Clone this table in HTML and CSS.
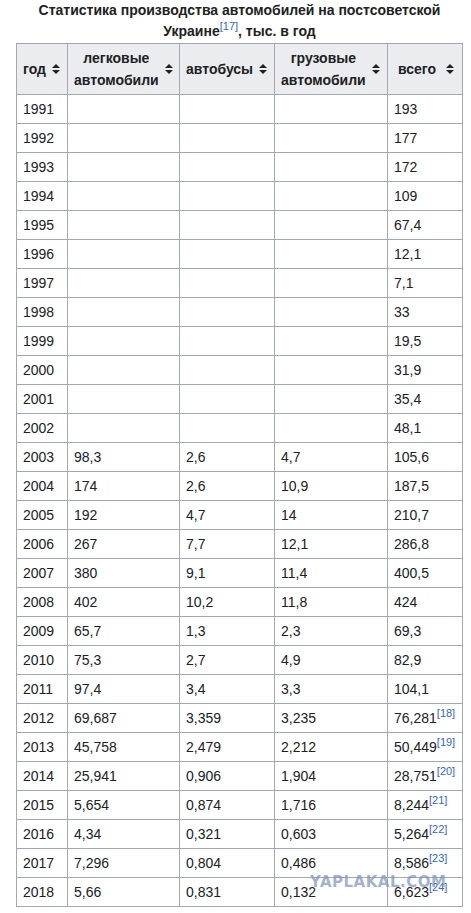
FILE: index.html
```html
<!DOCTYPE html>
<html lang="ru">
<head>
<meta charset="UTF-8">
<link rel="stylesheet" href="styles.css">
</head>
<body>
<div class="page">
  <table class="wikitable">
    <caption>Статистика производства автомобилей на постсоветской Украине<sup class="ref">[17]</sup>, тыс. в год</caption>
    <colgroup>
      <col class="c-year"><col class="c-cars"><col class="c-bus"><col class="c-truck"><col class="c-total">
    </colgroup>
    <thead>
      <tr>
        <th><div class="th-in"><span class="lbl">год</span><svg class="sort" viewBox="0 0 8 10"><path d="M4 0 L8 4 H0 Z M4 10 L8 6 H0 Z"/></svg></div></th>
        <th><div class="th-in"><span class="lbl">легковые автомобили</span><svg class="sort" viewBox="0 0 8 10"><path d="M4 0 L8 4 H0 Z M4 10 L8 6 H0 Z"/></svg></div></th>
        <th><div class="th-in"><span class="lbl">автобусы</span><svg class="sort" viewBox="0 0 8 10"><path d="M4 0 L8 4 H0 Z M4 10 L8 6 H0 Z"/></svg></div></th>
        <th><div class="th-in"><span class="lbl">грузовые автомобили</span><svg class="sort" viewBox="0 0 8 10"><path d="M4 0 L8 4 H0 Z M4 10 L8 6 H0 Z"/></svg></div></th>
        <th><div class="th-in"><span class="lbl">всего</span><svg class="sort" viewBox="0 0 8 10"><path d="M4 0 L8 4 H0 Z M4 10 L8 6 H0 Z"/></svg></div></th>
      </tr>
    </thead>
    <tbody>
      <tr><td>1991</td><td></td><td></td><td></td><td>193</td></tr>
      <tr><td>1992</td><td></td><td></td><td></td><td>177</td></tr>
      <tr><td>1993</td><td></td><td></td><td></td><td>172</td></tr>
      <tr><td>1994</td><td></td><td></td><td></td><td>109</td></tr>
      <tr><td>1995</td><td></td><td></td><td></td><td>67,4</td></tr>
      <tr><td>1996</td><td></td><td></td><td></td><td>12,1</td></tr>
      <tr><td>1997</td><td></td><td></td><td></td><td>7,1</td></tr>
      <tr><td>1998</td><td></td><td></td><td></td><td>33</td></tr>
      <tr><td>1999</td><td></td><td></td><td></td><td>19,5</td></tr>
      <tr><td>2000</td><td></td><td></td><td></td><td>31,9</td></tr>
      <tr><td>2001</td><td></td><td></td><td></td><td>35,4</td></tr>
      <tr><td>2002</td><td></td><td></td><td></td><td>48,1</td></tr>
      <tr><td>2003</td><td>98,3</td><td>2,6</td><td>4,7</td><td>105,6</td></tr>
      <tr><td>2004</td><td>174</td><td>2,6</td><td>10,9</td><td>187,5</td></tr>
      <tr><td>2005</td><td>192</td><td>4,7</td><td>14</td><td>210,7</td></tr>
      <tr><td>2006</td><td>267</td><td>7,7</td><td>12,1</td><td>286,8</td></tr>
      <tr><td>2007</td><td>380</td><td>9,1</td><td>11,4</td><td>400,5</td></tr>
      <tr><td>2008</td><td>402</td><td>10,2</td><td>11,8</td><td>424</td></tr>
      <tr><td>2009</td><td>65,7</td><td>1,3</td><td>2,3</td><td>69,3</td></tr>
      <tr><td>2010</td><td>75,3</td><td>2,7</td><td>4,9</td><td>82,9</td></tr>
      <tr><td>2011</td><td>97,4</td><td>3,4</td><td>3,3</td><td>104,1</td></tr>
      <tr><td>2012</td><td>69,687</td><td>3,359</td><td>3,235</td><td>76,281<sup class="ref">[18]</sup></td></tr>
      <tr><td>2013</td><td>45,758</td><td>2,479</td><td>2,212</td><td>50,449<sup class="ref">[19]</sup></td></tr>
      <tr><td>2014</td><td>25,941</td><td>0,906</td><td>1,904</td><td>28,751<sup class="ref">[20]</sup></td></tr>
      <tr><td>2015</td><td>5,654</td><td>0,874</td><td>1,716</td><td>8,244<sup class="ref">[21]</sup></td></tr>
      <tr><td>2016</td><td>4,34</td><td>0,321</td><td>0,603</td><td>5,264<sup class="ref">[22]</sup></td></tr>
      <tr><td>2017</td><td>7,296</td><td>0,804</td><td>0,486</td><td>8,586<sup class="ref">[23]</sup></td></tr>
      <tr><td>2018</td><td>5,66</td><td>0,831</td><td>0,132</td><td>6,623<sup class="ref">[24]</sup></td></tr>
    </tbody>
  </table>
  <div class="watermark">YAPLAKAL.COM</div>
</div>
</body>
</html>
```

FILE: styles.css
```css
body {
  margin: 0;
  background: #fff;
  font-family: "Liberation Sans", Arial, sans-serif;
  font-size: 14px;
  color: #202122;
}

.page {
  position: relative;
  padding-left: 16px;
}

.wikitable {
  border-collapse: collapse;
  table-layout: fixed;
  width: 447px;
  border: 1px solid #a2a9b1;
  background: #fff;
}

.wikitable caption {
  font-weight: bold;
  line-height: 21px;
  padding-bottom: 1px;
  text-align: center;
}

.c-year { width: 51px; }
.c-cars { width: 112px; }
.c-bus { width: 95px; }
.c-truck { width: 113px; }
.c-total { width: 75px; }

.wikitable th,
.wikitable td {
  border: 1px solid #a2a9b1;
  padding: 3px 6px;
  line-height: 22px;
  vertical-align: middle;
}

.wikitable th {
  background: #eaecf0;
  font-weight: bold;
  padding: 3px 8px 3px 6px;
}

.wikitable td {
  height: 22px;
  text-align: left;
}

.th-in {
  display: flex;
  align-items: center;
  gap: 6px;
}

.th-in .lbl {
  flex: 1;
  text-align: center;
}

.sort {
  width: 8px;
  height: 10px;
  flex: none;
  fill: #202122;
}

.ref {
  color: #3366cc;
  font-size: 11px;
  font-weight: normal;
  line-height: 1;
  vertical-align: 6px;
}

.watermark {
  position: absolute;
  left: 310px;
  top: 873px;
  font-family: "DejaVu Sans", sans-serif;
  font-weight: bold;
  font-size: 15px;
  letter-spacing: 0.5px;
  color: rgba(120, 145, 180, 0.7);
}
```
